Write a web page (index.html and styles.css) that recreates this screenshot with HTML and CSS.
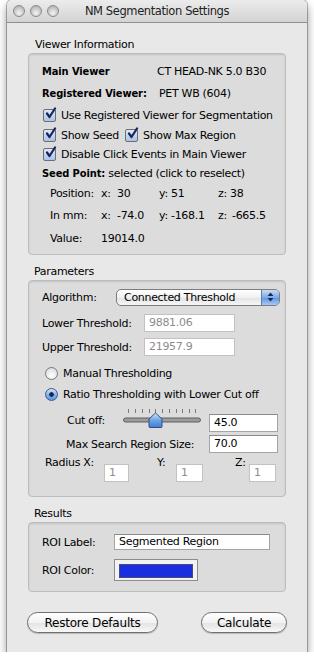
FILE: index.html
```html
<!DOCTYPE html>
<html lang="en">
<head>
    <meta charset="UTF-8">
    <title>NM Segmentation Settings</title>
    <link rel="stylesheet" href="styles.css">
</head>
<body>
    <div class="window">
        <div class="titlebar">
            <div class="lights">
                <span class="light"></span>
                <span class="light"></span>
                <span class="light"></span>
            </div>
            <div class="title">NM Segmentation Settings</div>
        </div>

        <div class="content">
            <div class="group-label">Viewer Information</div>
            <div class="box viewer">
                <div class="row h22"><b class="vlabel">Main Viewer</b><span>CT HEAD-NK 5.0 B30</span></div>
                <div class="row h22"><b class="vlabel wide">Registered Viewer:</b><span>PET WB (604)</span></div>
                <div class="row h22 check-row">
                    <span class="check"><svg width="13" height="13" viewBox="0 0 13 13"><path d="M3 6.5 L5.5 10 L11 1.5" fill="none" stroke="#17245c" stroke-width="2.2" stroke-linecap="round" stroke-linejoin="round"/></svg></span>
                    Use Registered Viewer for Segmentation
                </div>
                <div class="row h18 check-row">
                    <span class="check"><svg width="13" height="13" viewBox="0 0 13 13"><path d="M3 6.5 L5.5 10 L11 1.5" fill="none" stroke="#17245c" stroke-width="2.2" stroke-linecap="round" stroke-linejoin="round"/></svg></span>
                    <span class="seed-col">Show Seed</span>
                    <span class="check"><svg width="13" height="13" viewBox="0 0 13 13"><path d="M3 6.5 L5.5 10 L11 1.5" fill="none" stroke="#17245c" stroke-width="2.2" stroke-linecap="round" stroke-linejoin="round"/></svg></span>
                    Show Max Region
                </div>
                <div class="row h20 check-row">
                    <span class="check"><svg width="13" height="13" viewBox="0 0 13 13"><path d="M3 6.5 L5.5 10 L11 1.5" fill="none" stroke="#17245c" stroke-width="2.2" stroke-linecap="round" stroke-linejoin="round"/></svg></span>
                    Disable Click Events in Main Viewer
                </div>
                <div class="row h18"><b>Seed Point:</b>&nbsp;selected (click to reselect)</div>
                <div class="row h22 coords">
                    <span class="clabel">Position:</span>
                    <span class="cx"><span class="ax">x:</span>30</span>
                    <span class="cy"><span class="ay">y:</span>51</span>
                    <span class="cz"><span class="az">z:</span>38</span>
                </div>
                <div class="row h22 coords">
                    <span class="clabel">In mm:</span>
                    <span class="cx"><span class="ax">x:</span>-74.0</span>
                    <span class="cy"><span class="ay">y:</span>-168.1</span>
                    <span class="cz mm"><span class="az">z:</span>-665.5</span>
                </div>
                <div class="row h24 coords">
                    <span class="clabel">Value:</span>
                    <span>19014.0</span>
                </div>
            </div>

            <div class="group-label gap">Parameters</div>
            <div class="box params">
                <div class="row h20">
                    <span class="plabel">Algorithm:</span>
                    <div class="popup">
                        <span class="popup-text">Connected Threshold</span>
                        <span class="popup-arrows"><svg width="7" height="10" viewBox="0 0 7 10"><path d="M3.5 0.5 L6.5 4 L0.5 4 Z M3.5 9.5 L6.5 6 L0.5 6 Z" fill="#1c2a55"/></svg></span>
                    </div>
                </div>
                <div class="row h20 mt6">
                    <span class="plabel long">Lower Threshold:</span>
                    <span class="field disabled thresh">9881.06</span>
                </div>
                <div class="row h20 mt4">
                    <span class="plabel long">Upper Threshold:</span>
                    <span class="field disabled thresh">21957.9</span>
                </div>
                <div class="row h18 mt7 radio-row">
                    <span class="radio"></span>
                    Manual Thresholding
                </div>
                <div class="row h18 mt3 radio-row">
                    <span class="radio on"></span>
                    Ratio Thresholding with Lower Cut off
                </div>
                <div class="row h20 mt10">
                    <span class="cut-label">Cut off:</span>
                    <svg class="slider" width="78" height="24" viewBox="0 0 78 24">
                        <g stroke="#7a7a7a" stroke-width="1">
                            <line x1="5.5" y1="1" x2="5.5" y2="5"/>
                            <line x1="12.5" y1="1" x2="12.5" y2="5"/>
                            <line x1="19.5" y1="1" x2="19.5" y2="5"/>
                            <line x1="26.5" y1="1" x2="26.5" y2="5"/>
                            <line x1="32.5" y1="1" x2="32.5" y2="5"/>
                            <line x1="39.5" y1="1" x2="39.5" y2="5"/>
                            <line x1="46.5" y1="1" x2="46.5" y2="5"/>
                            <line x1="53.5" y1="1" x2="53.5" y2="5"/>
                            <line x1="59.5" y1="1" x2="59.5" y2="5"/>
                            <line x1="66.5" y1="1" x2="66.5" y2="5"/>
                            <line x1="72.5" y1="1" x2="72.5" y2="5"/>
                        </g>
                        <rect x="0.5" y="10" width="77" height="4" rx="2" fill="#9c9c9c" stroke="#5e5e5e" stroke-width="1"/>
                        <defs>
                            <linearGradient id="knob" x1="0" y1="0" x2="0" y2="1">
                                <stop offset="0" stop-color="#d8e8fb"/>
                                <stop offset="0.5" stop-color="#6fa3e6"/>
                                <stop offset="1" stop-color="#3f7fd6"/>
                            </linearGradient>
                        </defs>
                        <path d="M32.5 5 L39 11 L39 18.5 Q39 19.5 38 19.5 L27 19.5 Q26 19.5 26 18.5 L26 11 Z" fill="url(#knob)" stroke="#2d4f86" stroke-width="1"/>
                    </svg>
                    <span class="field num">45.0</span>
                </div>
                <div class="row h20 mt1">
                    <span class="max-label">Max Search Region Size:</span>
                    <span class="field num">70.0</span>
                </div>
                <div class="row h20 mt8 radius-row">
                    <span class="rlabel">Radius X:</span>
                    <span class="field disabled small">1</span>
                    <span class="rlabel ylabel">Y:</span>
                    <span class="field disabled small wider">1</span>
                    <span class="rlabel zlabel">Z:</span>
                    <span class="field disabled small wider">1</span>
                </div>
            </div>

            <div class="group-label gap">Results</div>
            <div class="box results">
                <div class="row h18">
                    <span class="plabel roi">ROI Label:</span>
                    <span class="field roi-field">Segmented Region</span>
                </div>
                <div class="row h22 mt8">
                    <span class="plabel roi">ROI Color:</span>
                    <span class="well"><span class="swatch"></span></span>
                </div>
            </div>

            <div class="buttons">
                <button class="btn restore">Restore Defaults</button>
                <button class="btn calc">Calculate</button>
            </div>
        </div>
    </div>
</body>
</html>
```

FILE: styles.css
```css
body {
    margin: 0;
    background: #ffffff;
    font-family: "DejaVu Sans", Verdana, sans-serif;
    font-size: 11px;
    letter-spacing: -0.3px;
    color: #000;
}
b {
    font-family: "DejaVu Sans Condensed", "DejaVu Sans", sans-serif;
    letter-spacing: -0.1px;
}
.window {
    width: 300px;
    margin-left: 7px;
    background: #e8e8e8;
    border-radius: 5px 5px 0 0;
    box-shadow: 0 0 0 1px rgba(0, 0, 0, 0.25), 0 5px 10px rgba(0, 0, 0, 0.45);
}
.titlebar {
    height: 22px;
    display: flex;
    align-items: center;
    background: linear-gradient(#ececec, #d3d3d3);
    border-bottom: 1px solid #8f8f8f;
    border-radius: 5px 5px 0 0;
}
.lights {
    display: flex;
    gap: 5px;
    padding-left: 6px;
    width: 52px;
}
.light {
    width: 10px;
    height: 10px;
    border-radius: 50%;
    border: 1px solid #8c8c8c;
    background: radial-gradient(circle at 50% 70%, #f4f4f4, #c4c4c4 60%, #a8a8a8);
    box-sizing: content-box;
}
.title {
    flex: 1;
    text-align: center;
    margin-right: 58px;
    font-size: 11.5px;
    letter-spacing: -0.4px;
    color: #222;
}
.content {
    padding: 14px 21px 19px;
}
.group-label {
    height: 16px;
    line-height: 16px;
    padding-left: 7px;
}
.group-label.gap {
    margin-top: 9px;
    padding-left: 6px;
}
.box {
    background: #dcdcdc;
    border: 1px solid #bdbdbd;
    border-radius: 4px;
    box-shadow: inset 0 1px 2px rgba(0, 0, 0, 0.12);
    padding-left: 13px;
}
.row {
    display: flex;
    align-items: center;
    white-space: nowrap;
}
.h18 { height: 18px; }
.h20 { height: 20px; }
.h22 { height: 22px; }
.h24 { height: 24px; }
.mt1 { margin-top: 1px; }
.mt3 { margin-top: 3px; }
.mt4 { margin-top: 4px; }
.mt6 { margin-top: 6px; }
.mt7 { margin-top: 7px; }
.mt8 { margin-top: 8px; }
.mt10 { margin-top: 10px; }

/* viewer information */
.viewer {
    padding-top: 6px;
    padding-bottom: 4px;
}
.vlabel {
    width: 115px;
}
.vlabel.wide {
    width: 117px;
}
.check-row {
    padding-left: 1px;
}
.check {
    width: 13px;
    height: 13px;
    margin-right: 5px;
    border: 1px solid #6f6f6f;
    border-radius: 2px;
    box-sizing: border-box;
    background: linear-gradient(#dfe9f7, #a9c3e8);
    display: flex;
    align-items: center;
    justify-content: center;
}
.check svg {
    margin-top: -3px;
    margin-left: 2px;
    flex: none;
}
.seed-col {
    width: 64px;
}
.coords {
    padding-left: 8px;
}
.clabel {
    width: 51px;
}
.cx {
    width: 58px;
}
.cy {
    width: 59px;
}
.ax {
    display: inline-block;
    width: 16px;
}
.ay {
    display: inline-block;
    width: 12px;
}
.az {
    display: inline-block;
    width: 12px;
}
.cz.mm .az {
    width: 14px;
}

/* parameters */
.params {
    padding-top: 6px;
    padding-bottom: 14px;
}
.plabel {
    width: 74px;
}
.plabel.long {
    width: 102px;
}
.plabel.roi {
    width: 72px;
}
.popup {
    width: 164px;
    height: 17px;
    box-sizing: border-box;
    display: flex;
    border: 1px solid #7d7d7d;
    border-radius: 5px;
    background: linear-gradient(#ffffff, #f0f0f0 50%, #e2e2e2 51%, #f6f6f6);
    overflow: hidden;
}
.popup-text {
    flex: 1;
    line-height: 15px;
    padding-left: 7px;
}
.popup-arrows {
    width: 17px;
    border-left: 1px solid #5b7fb5;
    background: linear-gradient(#c7dcf6, #7eaae6 50%, #5d93df 51%, #a7c9f3);
    display: flex;
    align-items: center;
    justify-content: center;
}
.field {
    height: 18px;
    box-sizing: border-box;
    line-height: 16px;
    padding-left: 4px;
    background: #ffffff;
    border: 1px solid #a5a5a5;
    border-top-color: #8a8a8a;
}
.field.disabled {
    color: #8c8c8c;
    border-color: #c2c2c2;
}
.thresh {
    width: 91px;
}
.radio-row {
    padding-left: 3px;
}
.radio {
    width: 13px;
    height: 13px;
    box-sizing: border-box;
    margin-right: 5px;
    border-radius: 50%;
    border: 1px solid #7a7a7a;
    background: radial-gradient(circle at 50% 70%, #ffffff, #e6e6e6 60%, #cfcfcf);
}
.radio.on {
    border-color: #3a5a8c;
    background: radial-gradient(circle, #1b2440 0, #1b2440 2px, transparent 2.5px),
        linear-gradient(#d5e5f9, #7fb0ec 55%, #5b96e3);
}
.cut-label {
    width: 56px;
    padding-left: 25px;
    margin-bottom: 6px;
}
.slider {
    margin-right: 8px;
    margin-bottom: 6px;
}
.num {
    width: 69px;
}
.max-label {
    width: 143px;
    padding-left: 24px;
}
.radius-row {
    align-items: flex-end;
    padding-left: 3px;
}
.rlabel {
    align-self: flex-start;
    margin-top: -6px;
    line-height: 14px;
    width: 59px;
}
.ylabel {
    width: 19px;
    margin-left: 28px;
}
.zlabel {
    width: 14px;
    margin-left: 32px;
}
.small {
    width: 25px;
}
.small.wider {
    width: 27px;
}

/* results */
.results {
    padding-top: 10px;
    padding-bottom: 10px;
}
.roi-field {
    width: 156px;
    height: 16px;
    line-height: 14px;
}
.well {
    width: 84px;
    height: 22px;
    box-sizing: border-box;
    padding: 4px;
    border: 1px solid #8c8c8c;
    background: #f2f2f2;
}
.swatch {
    display: block;
    height: 12px;
    background: #1a2ee0;
    border: 1px solid #4a4a7a;
}

/* buttons */
.buttons {
    display: flex;
    justify-content: space-between;
    margin: 20px -1px 0;
}
.btn {
    height: 21px;
    font-family: "DejaVu Sans", Verdana, sans-serif;
    font-size: 12px;
    letter-spacing: -0.2px;
    color: #000;
    border: 1px solid #707070;
    border-radius: 11px;
    background: linear-gradient(#ffffff, #f2f2f2 50%, #e2e2e2 51%, #f8f8f8);
    box-shadow: 0 1px 1px rgba(0, 0, 0, 0.2);
    padding: 0;
}
.restore {
    width: 131px;
}
.calc {
    width: 86px;
}
```
